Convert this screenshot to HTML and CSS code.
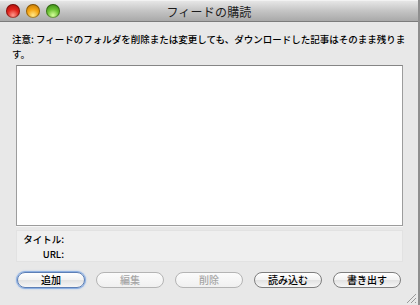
FILE: index.html
```html
<!DOCTYPE html>
<html lang="ja">
  <head>
    <meta charset="UTF-8" />
    <title>フィードの購読</title>
    <link rel="stylesheet" href="styles.css">
  </head>
  <body>
    <div class="window">
      <!-- タイトルバー -->
      <div class="titlebar">
        <div class="lights">
          <span class="light red"></span>
          <span class="light yellow"></span>
          <span class="light green"></span>
        </div>
        <div class="title">フィードの購読</div>
        <div></div>
      </div>

      <div class="content">
        <p class="note">
          注意: フィードのフォルダを削除または変更しても、ダウンロードした記事はそのまま残りま<br />す。
        </p>

        <div class="feed-list"></div>

        <div class="info">
          <div class="label">タイトル:</div>
          <div class="value"></div>
          <div class="label">URL:</div>
          <div class="value"></div>
        </div>

        <div class="buttons">
          <button class="btn default">追加</button>
          <button class="btn" disabled>編集</button>
          <button class="btn" disabled>削除</button>
          <button class="btn">読み込む</button>
          <button class="btn">書き出す</button>
        </div>
      </div>

      <svg class="grip" width="12" height="12" viewBox="0 0 12 12">
        <line x1="11" y1="2" x2="2" y2="11" stroke="#9a9a9a" stroke-width="1" />
        <line x1="11" y1="6" x2="6" y2="11" stroke="#9a9a9a" stroke-width="1" />
        <line x1="11" y1="10" x2="10" y2="11" stroke="#9a9a9a" stroke-width="1" />
      </svg>
    </div>
  </body>
</html>
```

FILE: styles.css
```css
* {
  margin: 0;
  padding: 0;
  box-sizing: border-box;
}

body {
  font-family: "Noto Sans CJK JP", "Noto Sans", sans-serif;
  background-color: #e8e8e8;
  color: #111;
}

.window {
  position: relative;
  width: 420px;
  height: 305px;
  background-color: #e8e8e8;
  border-right: 2px solid #8e8e8e;
  display: flex;
  flex-direction: column;
}

/* タイトルバー */
.titlebar {
  height: 22px;
  display: grid;
  grid-template-columns: 1fr auto 1fr;
  align-items: center;
  background: linear-gradient(#e6e6e6, #c4c4c4 50%, #a9a9a9);
  border-top: 1px solid #f2f2f2;
  border-bottom: 1px solid #7c7c7c;
}

.lights {
  display: flex;
  gap: 6px;
  padding-left: 6px;
}

.light {
  width: 14px;
  height: 14px;
  border-radius: 50%;
  box-shadow: inset 0 0 0 1px rgba(0, 0, 0, 0.35);
}

.red {
  background: radial-gradient(circle at 50% 80%, #ff9a8e, #e0221a 45%, #9e0a07);
}

.yellow {
  background: radial-gradient(circle at 50% 80%, #ffe98a, #f5a411 45%, #b06a00);
}

.green {
  background: radial-gradient(circle at 50% 80%, #d7ff9c, #6bc132 45%, #2c7a0c);
}

.title {
  font-size: 12px;
  color: #1c1c1c;
  letter-spacing: 0.2px;
}

.content {
  flex: 1;
  padding: 0 15px 0 16px;
  display: flex;
  flex-direction: column;
}

.note {
  margin: 10px -4px 0;
  font-size: 9.5px;
  font-weight: 500;
  line-height: 15px;
  white-space: nowrap;
  color: #000;
}

.feed-list {
  margin-top: 3px;
  height: 161px;
  background-color: white;
  border: 1px solid #9c9c9c;
  border-top-color: #858585;
  box-shadow: 0 1px 0 #f7f7f7;
}

.info {
  margin-top: 4px;
  height: 32px;
  padding: 1px 0 0 6px;
  background-color: #efefef;
  border: 1px solid #e2e2e2;
  display: grid;
  grid-template-columns: 41px 1fr;
  column-gap: 4px;
  font-size: 9.5px;
  font-weight: 500;
  line-height: 15px;
}

.label {
  text-align: right;
  color: #000;
}

.buttons {
  margin-top: 10px;
  padding-left: 1px;
  display: flex;
  gap: 11px;
}

.btn {
  width: 68px;
  height: 16px;
  border-radius: 8px;
  border: 1px solid #7e7e7e;
  background: linear-gradient(#ffffff, #f2f2f2 50%, #e2e2e2 51%, #f6f6f6);
  font-family: inherit;
  font-size: 10px;
  font-weight: 500;
  line-height: 14px;
  color: #000;
}

.btn.default {
  border-color: #5d7fb5;
  box-shadow: 0 0 0 1px #8eb0e2, 0 0 2px 1px #a9c5ec;
}

.btn:disabled {
  border-color: #b4b4b4;
  color: #a6a6a6;
  background: linear-gradient(#fbfbfb, #f0f0f0);
}

.grip {
  position: absolute;
  right: 1px;
  bottom: 1px;
}
```
